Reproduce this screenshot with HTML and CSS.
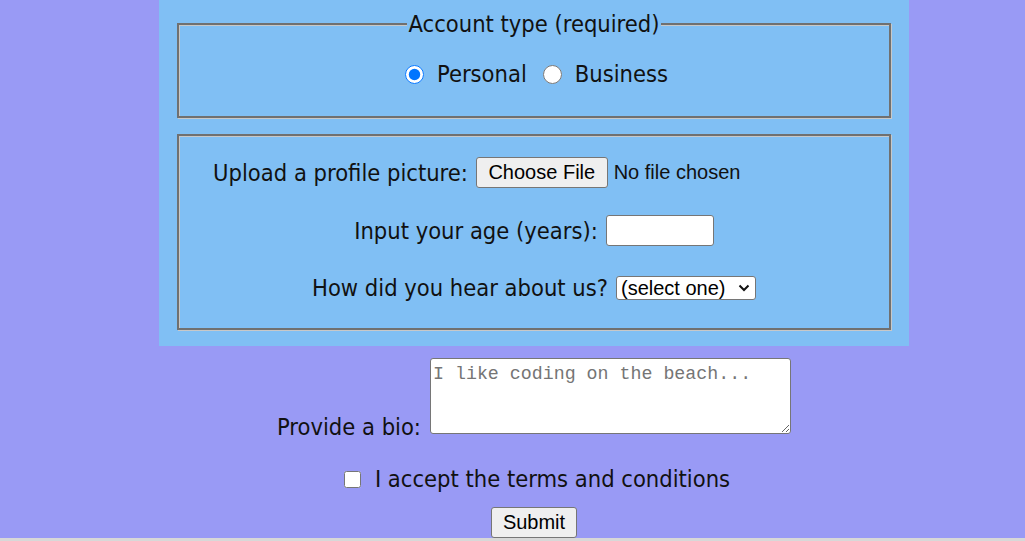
FILE: index.html
```html
<!DOCTYPE html>
<html lang="en">
<head>
<meta charset="utf-8">
<title>Registration Form</title>
<link rel="stylesheet" href="styles.css">
</head>
<body>
<div class="page">
  <form class="form">
    <div class="panel">
      <fieldset class="group group-account">
        <legend class="legend">Account type (required)</legend>
        <div class="radios">
          <label class="radio-label"><input class="radio" type="radio" name="account" checked> Personal</label>
          <label class="radio-label"><input class="radio" type="radio" name="account"> Business</label>
        </div>
      </fieldset>
      <fieldset class="group group-details">
        <label class="row">Upload a profile picture: <input class="file" type="file"></label>
        <label class="row">Input your age (years): <input class="age" type="number" min="13" max="120"></label>
        <label class="row">How did you hear about us?
          <span class="select-wrap">
            <select class="select">
              <option>(select one)</option>
              <option>freeCodeCamp News</option>
              <option>freeCodeCamp YouTube Channel</option>
              <option>freeCodeCamp Forum</option>
              <option>Other</option>
            </select>
            <svg class="chevron" width="12" height="8" viewBox="0 0 12 8" aria-hidden="true"><path d="M1.5 1.5 L6 6 L10.5 1.5" fill="none" stroke="#111" stroke-width="2"/></svg>
          </span>
        </label>
      </fieldset>
    </div>
    <label class="bio-row">Provide a bio: <textarea class="bio" rows="3" cols="30" placeholder="I like coding on the beach..."></textarea></label>
    <label class="terms"><input class="check" type="checkbox"> I accept the terms and conditions</label>
    <input class="submit" type="submit" value="Submit">
  </form>
</div>
<div class="scrollbar"></div>
</body>
</html>
```
FILE: styles.css
```css
html, body {
  margin: 0;
  padding: 0;
}

body {
  background: #999af5;
  color: #111;
  font-family: "DejaVu Sans Condensed", "DejaVu Sans", sans-serif;
  font-size: 23.5px;
  height: 541px;
  overflow: hidden;
  display: flex;
  flex-direction: column;
}

.page {
  flex: 1;
  display: flex;
  justify-content: center;
  padding-left: 43px;
}

.form {
  display: flex;
  flex-direction: column;
  align-items: center;
}

.panel {
  box-sizing: border-box;
  width: 750px;
  background: #80bff4;
  padding: 10px 18px 16px;
  display: flex;
  flex-direction: column;
  gap: 16px;
}

.group {
  margin: 0;
  border: 2px solid #707070;
  box-shadow: inset 1px 1px 0 #c8c8c8, 1px 1px 0 #c8c8c8;
  text-align: center;
}

.group-account {
  padding: 22px 12px 28px;
}

.legend {
  padding: 0 2px;
  line-height: 28px;
  background: #80bff4;
}

.radios {
  display: flex;
  justify-content: center;
  gap: 16px;
  line-height: 28px;
  padding-left: 5px;
}

.radio-label {
  display: flex;
  align-items: center;
  gap: 13px;
}

.radio {
  width: 19px;
  height: 19px;
  margin: 0;
}

.group-details {
  padding: 21px 12px 25px;
  display: flex;
  flex-direction: column;
  align-items: center;
  gap: 27px;
}

.row {
  display: flex;
  align-items: center;
  gap: 8px;
  line-height: 30px;
}

.file,
.age,
.select,
.submit {
  font-family: "Liberation Sans", Arial, sans-serif;
  font-size: 20px;
}

.file::file-selector-button {
  font: inherit;
  padding: 3px 11.5px;
  margin-right: 6px;
  border: 1px solid #767676;
  border-radius: 3px;
  background: #efefef;
  color: #000;
}

.age {
  width: 108px;
  height: 31px;
  box-sizing: border-box;
  border: 1px solid #767676;
  border-radius: 3px;
  background: #fff;
}

.select-wrap {
  position: relative;
  display: flex;
}

.select {
  appearance: none;
  -webkit-appearance: none;
  width: 140px;
  height: 24px;
  box-sizing: border-box;
  padding: 0 0 0 4px;
  line-height: 22px;
  border: 1px solid #767676;
  border-radius: 3px;
  background: #fff;
  color: #000;
}

.chevron {
  position: absolute;
  right: 6px;
  top: 8px;
  pointer-events: none;
}

.bio-row {
  margin-top: 12px;
  display: flex;
  align-items: flex-end;
  gap: 9px;
}

.bio {
  width: 361px;
  height: 76px;
  box-sizing: border-box;
  font-family: "Liberation Mono", monospace;
  font-size: 18.3px;
  padding: 5px 3px 2px 2px;
  margin: 0 0 7px;
  border: 1px solid #767676;
  border-radius: 3px;
}

.terms {
  margin-top: 24px;
  padding-left: 6px;
  display: flex;
  align-items: center;
  gap: 14px;
  line-height: 28px;
}

.check {
  width: 17px;
  height: 17px;
  margin: 0;
}

.submit {
  margin-top: 14px;
  height: 31px;
  padding: 0 11px;
  border: 1px solid #767676;
  border-radius: 3px;
  background: #efefef;
  color: #000;
}

.scrollbar {
  height: 3px;
  background: #d8d8d8;
}
```
